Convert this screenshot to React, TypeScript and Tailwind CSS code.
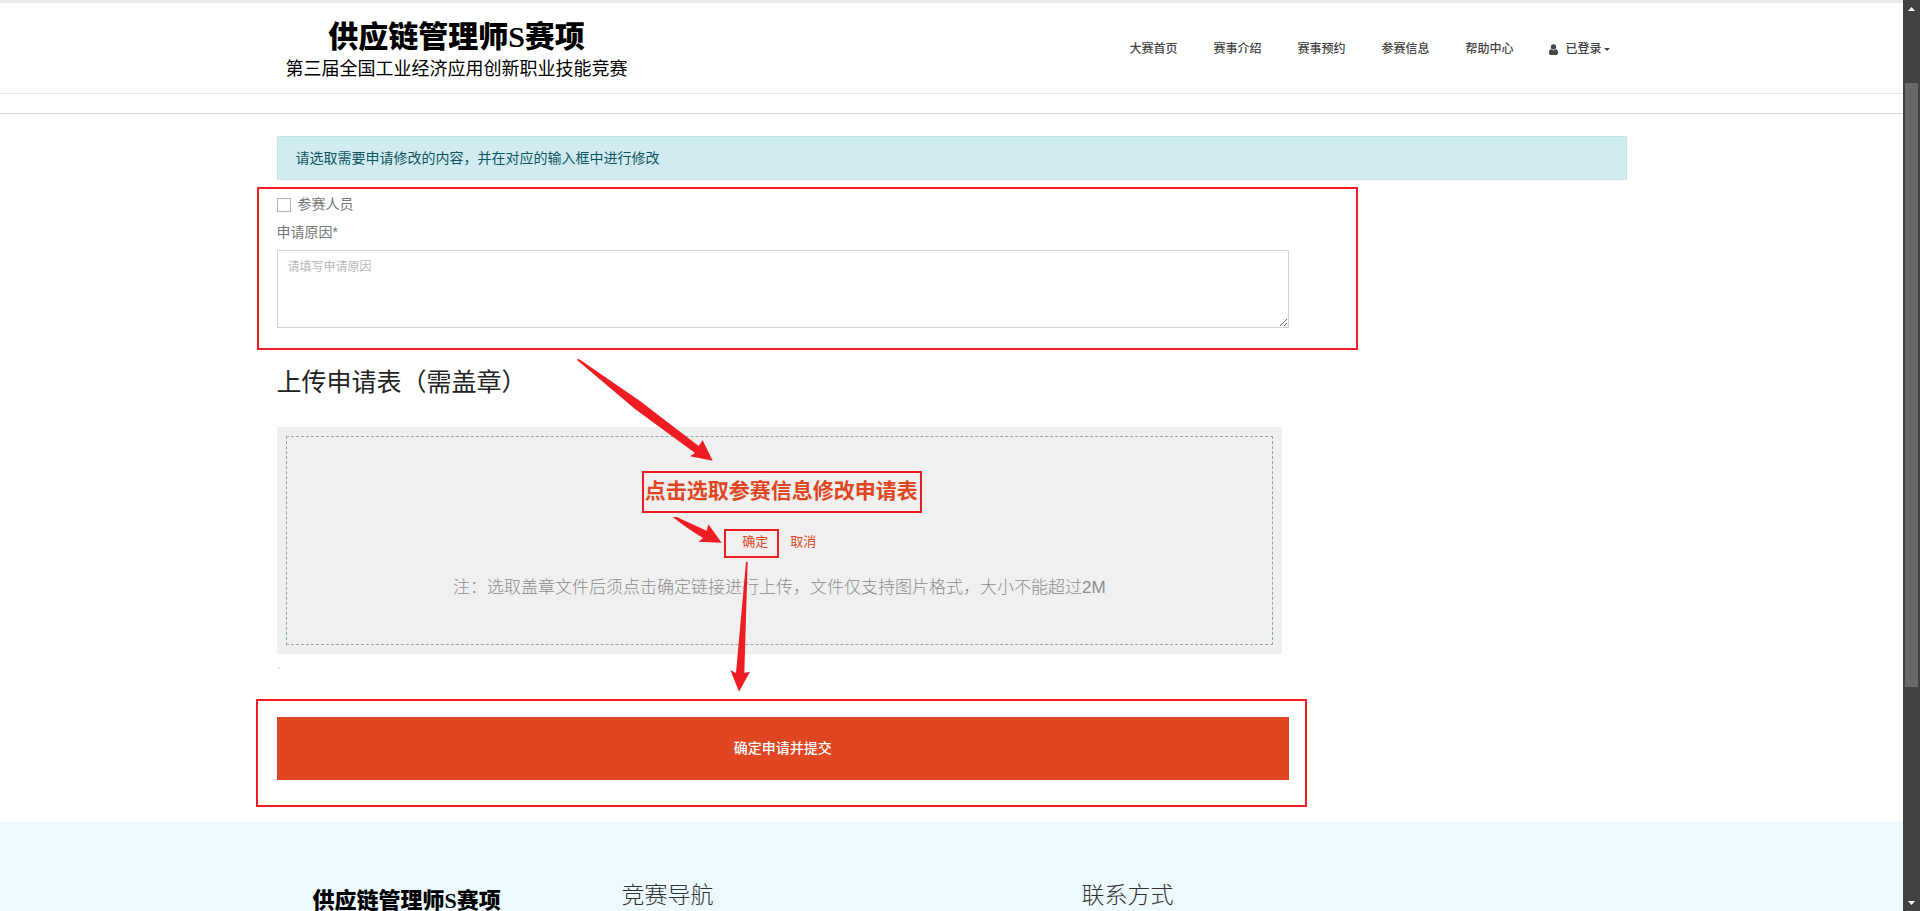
import React from 'react';

const navItems = ['大赛首页', '赛事介绍', '赛事预约', '参赛信息', '帮助中心'];

function Container({ children, className = '' }: { children: React.ReactNode; className?: string }) {
  return <div className={`mx-auto w-full max-w-[1380px] px-[15px] ${className}`}>{children}</div>;
}

function UserIcon() {
  return (
    <svg viewBox="0 0 10 12" className="h-[11px] w-[9px] fill-[#444]" aria-hidden="true">
      <circle cx="5" cy="3.1" r="3" />
      <path d="M2 5.4C.8 6 0 7.500 0 10c0 1.200.7 2 1.800 2h6.400C9.300 12 10 11.200 10 10c0-2.500-.8-4-2-4.600C7.300 6.300 6.200 6.800 5 6.800s-2.300-.5-3-1.400z" />
    </svg>
  );
}

function Header() {
  return (
    <header className="border-t-[3px] border-b border-t-[#ebebeb] border-b-[#e5e5e5]">
      <Container className="flex h-[90px] items-center justify-between pt-[2px]">
        <a href="#home" className="ml-[9px] flex flex-col items-center pt-1 text-black">
          <span className="font-['Liberation_Serif','Noto_Sans_CJK_SC',serif] text-[30px] leading-9 font-black">供应链管理师S赛项</span>
          <span className="text-lg leading-7">第三届全国工业经济应用创新职业技能竞赛</span>
        </a>
        <nav className="mr-[17px] flex items-center gap-9 text-xs font-medium text-[#444]">
          {navItems.map((item) => (
            <a key={item} href="#nav">{item}</a>
          ))}
          <button type="button" className="flex items-center">
            <UserIcon />
            <span className="ml-[7px]">已登录</span>
            <svg viewBox="0 0 6 3" className="ml-[2px] h-[3px] w-[6px] fill-[#444]" aria-hidden="true">
              <path d="M0 0h6L3 3z" />
            </svg>
          </button>
        </nav>
      </Container>
    </header>
  );
}

function Marker({ className }: { className: string }) {
  return <div aria-hidden="true" className={`pointer-events-none absolute border-2 border-[#f01c24] ${className}`} />;
}

function Arrows() {
  return (
    <svg viewBox="0 0 1200 1080" className="pointer-events-none absolute top-[214px] left-[283px] h-[360px] w-[400px] fill-[#f01c24]" aria-hidden="true">
      <path d="M51 28 L58 28 L240 153 L416 288 L428 271 L458 332 L390 319 L405 309 L225 177 L51 30z" />
      <path d="M338 501 L350 501 L440 542 L445 523 L485 578 L415 575 L429 564 Q385 538 338 501z" />
      <path d="M558 636 L563 636 L553 969 L570 965 L537 1025 L511 960 L528 969z" />
    </svg>
  );
}

function ApplyForm() {
  return (
    <form className="relative" onSubmit={(e) => e.preventDefault()}>
      <div role="alert" className="border border-[#bee5eb] bg-[#d1ecf1] px-[18px] py-[11px] text-sm leading-5 text-[#0c5460]">
        请选取需要申请修改的内容，并在对应的输入框中进行修改
      </div>

      <div className="w-3/4">
        <div className="relative text-sm leading-[21px] text-[#777]">
          <Marker className="-top-[7px] -right-[69px] -bottom-[22px] -left-5" />
          <label className="mt-[14px] flex items-center gap-[7px]">
            <input type="checkbox" className="size-[14px] appearance-none border border-[#adb5bd] bg-white checked:bg-[#e04622]" />
            参赛人员
          </label>
          <label htmlFor="reason" className="mt-[7px] block">申请原因*</label>
          <textarea
            id="reason"
            placeholder="请填写申请原因"
            className="mt-[7px] block h-[78px] w-full resize border border-[#ced4da] px-[10px] py-[7px] text-xs leading-[18px] placeholder:text-[#b8b8b8]"
          />
        </div>

        <h2 className="mt-9 text-[25px] leading-9 text-[#222]">上传申请表（需盖章）</h2>

        <div className="mt-[27px] mr-[7px] bg-[#f0f0f0] p-[9px]">
          <div className="flex flex-col items-center border border-dashed border-[#8fa8a4] pt-[38px] pb-[42px]">
            <label className="relative ml-1 cursor-pointer text-[21px] leading-8 font-bold text-[#e04622]">
              点击选取参赛信息修改申请表
              <input type="file" accept="image/*" className="sr-only" />
              <Marker className="-top-1 -right-1 -bottom-[6px] -left-[3px]" />
            </label>
            <div className="mt-[25px] flex gap-[22px] text-[13px] leading-5 text-[#e04622]">
              <a href="#confirm" className="relative">
                确定
                <Marker className="-top-[3px] -right-[11px] -bottom-[6px] -left-[18px]" />
              </a>
              <a href="#cancel">取消</a>
            </div>
            <p className="mt-[22px] text-[17px] leading-7 font-light text-[#8c8c8c]">
              注：选取盖章文件后须点击确定链接进行上传，文件仅支持图片格式，大小不能超过2M
            </p>
          </div>
        </div>

        <p className="text-sm leading-[21px] text-[#ccc]">.</p>

        <div className="relative mt-[42px]">
          <button type="submit" className="block h-[63px] w-full bg-[#e04622] pb-[2px] text-sm font-medium text-white">确定申请并提交</button>
          <Marker className="-top-[18px] -right-[18px] -bottom-[27px] -left-[21px]" />
        </div>
      </div>

      <Arrows />
    </form>
  );
}

function Footer() {
  return (
    <footer className="min-h-[180px] bg-[#ecf9fe] pt-[57px]">
      <Container>
        <div className="-mx-[15px] grid grid-cols-12 text-[23px] leading-8 font-light text-[#333]">
          <div className="col-span-3 px-[15px]">
            <div className="mt-[6px] ml-9 font-['Liberation_Serif','Noto_Sans_CJK_SC',serif] text-[22px] font-black text-black">供应链管理师S赛项</div>
          </div>
          <h3 className="col-span-4 px-[15px]">竞赛导航</h3>
          <h3 className="col-span-5 px-[15px]">联系方式</h3>
        </div>
      </Container>
    </footer>
  );
}

function ScrollRail() {
  return (
    <div aria-hidden="true" className="flex w-[17px] shrink-0 flex-col items-center bg-[#424242]">
      <svg viewBox="0 0 17 17" className="size-[17px] fill-white"><path d="M5 11h7L8.500 7z" /></svg>
      <div className="grow-[66]" />
      <div className="w-[13px] grow-[604] bg-[#686868]" />
      <div className="grow-[207]" />
      <svg viewBox="0 0 17 17" className="size-[17px] fill-white"><path d="M5 7h7L8.500 11z" /></svg>
    </div>
  );
}

export default function App() {
  return (
    <div className="flex h-screen overflow-hidden bg-white font-['Liberation_Sans','Noto_Sans_CJK_SC',sans-serif]">
      <div className="min-w-0 flex-1 overflow-hidden">
        <Header />
        <div className="h-5 border-b border-[#d3d8d8]" />
        <main className="pt-[22px] pb-[42px]">
          <Container>
            <ApplyForm />
          </Container>
        </main>
        <Footer />
      </div>
      <ScrollRail />
    </div>
  );
}
